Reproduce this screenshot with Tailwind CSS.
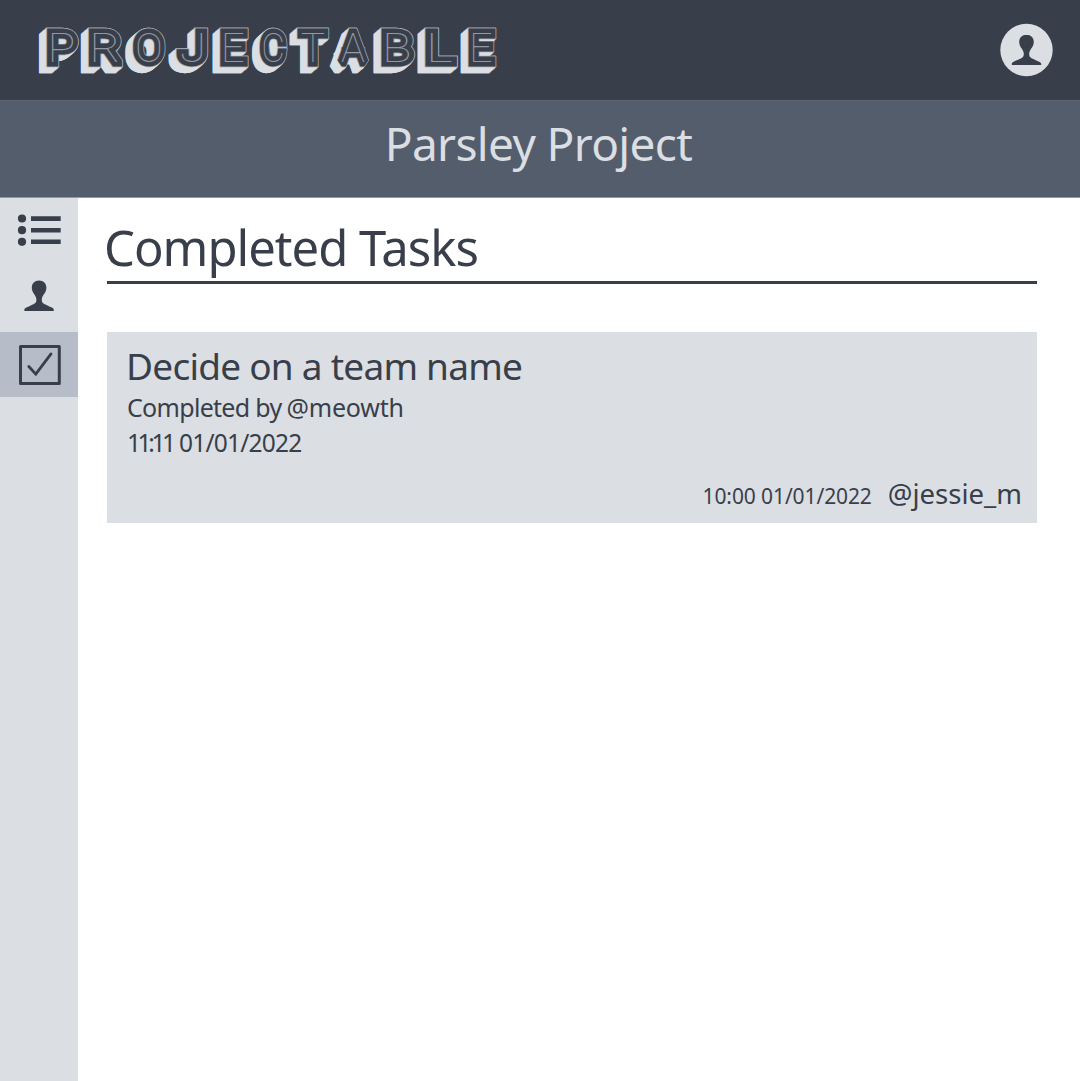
<!DOCTYPE html>
<html lang="en">
<head>
<meta charset="utf-8">
<title>Projectable</title>
<script src="https://cdn.jsdelivr.net/npm/@tailwindcss/browser@4"></script>
</head>
<body class="h-[1081px] w-[1080px] overflow-hidden bg-white text-[#393f4a] font-['Noto_Sans',sans-serif] flex flex-col">
<header class="h-[100px] shrink-0 bg-[#393f4a] flex items-center justify-between pl-[34px] pr-[27px]">
  <svg id="logo" class="w-[470px] h-[60px]" viewBox="34 20 470 60" aria-label="PROJECTABLE"></svg>
  <svg class="w-[53px] h-[54px]" viewBox="1000 23 53 54"><circle cx="1026.5" cy="50" r="26.2" fill="#dbdee3"/><path fill="#393f4a" d="M1026.500 34.700c-4.400 0-7.300 3-7.300 7.200 0 5.400 4.600 7.300 4.600 12 0 3.200-1.500 3.600-3.600 4.800-4.200 2.300-8.400 3.200-8.400 5.200v1.200h29.400v-1.200c0-2-4.200-2.900-8.400-5.200-2.100-1.200-3.600-1.600-3.600-4.800 0-4.700 4.600-6.600 4.600-12 0-4.200-2.900-7.200-7.300-7.200z"/></svg>
</header>
<div class="h-[98px] shrink-0 bg-[#545d6c] border-t border-b border-t-[#5c6574] border-b-[#9299a4] text-[#dbdee3] flex justify-center pt-[10px] pr-[3px]"><h1 class="text-[46px] leading-[64px] tracking-[-0.65px] whitespace-nowrap"><span>Parsley Project</span></h1></div>
<div class="flex grow">
  <aside class="w-[78px] bg-[#dbdee3] flex flex-col">
    <a class="h-[66px]"><svg class="w-[78px] h-[66px]" viewBox="0 198 78 66" fill="#393f4a"><circle cx="22" cy="218.500" r="4.100"/><circle cx="22" cy="230.200" r="4.100"/><circle cx="22" cy="241.800" r="4.100"/><path d="M31 216.200h29.700v4.700H31zM31 227.900h29.700v4.700H31zM31 239.400h29.700v4.700H31z"/></svg></a>
    <a class="h-[68px]"><svg class="w-[78px] h-[68px]" viewBox="0 264 78 68"><path fill="#393f4a" d="M39.100 280.500c-4.400 0-7.300 3-7.300 7.200 0 5.400 4.600 7.300 4.600 12 0 3.200-1.500 3.600-3.600 4.800-4.200 2.300-8.400 3.200-8.400 5.200v1.300h29.400v-1.300c0-2-4.200-2.900-8.400-5.200-2.100-1.200-3.600-1.600-3.600-4.800 0-4.700 4.600-6.600 4.600-12 0-4.200-2.900-7.200-7.300-7.200z"/></svg></a>
    <a class="h-[65px] bg-[#b6bdc8]"><svg class="w-[78px] h-[65px]" viewBox="0 332 78 65" fill="none" stroke="#393f4a"><rect x="20.500" y="346.400" width="38.800" height="37.200" stroke-width="3" stroke-linejoin="round"/><path d="M28.800 366.500l7 7.600 15.200-20.200" stroke-width="2.800" stroke-linecap="round"/></svg></a>
  </aside>
  <main class="grow pl-[29px] pr-[43px] pt-[19px]">
    <h2 class="h-[67px] border-b-3 border-[#393f4a] text-[49px] leading-[61px] tracking-[-1px] whitespace-nowrap"><span class="-ml-[3px]">Completed Tasks</span></h2>
    <section class="mt-12 h-[191px] bg-[#dbdee3] pl-5 pr-[15px] pt-[9px] flex flex-col whitespace-nowrap">
      <h3 class="-ml-px text-[37px] leading-[50px] tracking-[-0.75px]"><span>Decide on a team name</span></h3>
      <p class="h-[34px] text-[25px] leading-[32px] tracking-[-0.7px] flex gap-[5px]"><span>Completed by</span><span class="tracking-[-0.2px]">@meowth</span></p>
      <p class="text-[24.5px] leading-[36px] flex gap-[7px]"><span class="tracking-[-3.4px] w-[45px]">11:11</span><span class="tracking-[-0.8px]">01/01/2022</span></p>
      <div class="mt-3 flex items-baseline justify-end gap-4"><time class="text-[21px] tracking-[-0.1px]">10:00 01/01/2022</time><span class="text-[27.5px]">@jessie_m</span></div>
    </section>
  </main>
</div>
<script>
// Extruded wordmark: a hairline typeface is stroked to make the face, repeated to make the shadow.
const letters = [['P',46,78],['R',88,122.7],['O',132,166],['J',176,208],['E',219,249],['C',258,288],['T',296.7,329],['A',336,370],['B',380.7,414],['L',425,457],['E',467,496.7]];
const ctx = document.createElement('canvas').getContext('2d');
ctx.font = '100 40px Roboto';
const S = 10, top0 = 27, bottom = 67;
const word = letters.map(([c, a, b]) => {
  const m = ctx.measureText(c), w = m.actualBoundingBoxLeft + m.actualBoundingBoxRight;
  const h = m.actualBoundingBoxAscent + m.actualBoundingBoxDescent;
  const sx = (b - a - S) / w, sy = (bottom - top0 - S) / h;
  const x = a + S / 2 + m.actualBoundingBoxLeft * sx, y = bottom - S / 2 - m.actualBoundingBoxDescent * sy;
  return `<text transform="translate(${x} ${y}) scale(${sx} ${sy})">${c}</text>`;
}).join('');
const layer = (dx, dy, style) => `<use href="#word" x="${dx}" y="${dy}" ${style}/>`;
let out = `<defs><g id="word" font-family="Roboto" font-weight="100" font-size="40" stroke-linejoin="miter" stroke-miterlimit="1.6">${word}</g></defs>`;
for (let i = 16; i >= 1; i--) out += layer(-7.2 * i / 16, 6.2 * i / 16, 'fill="#dbdee3" stroke="#dbdee3" stroke-width="10"');
out += layer(0, 0, 'fill="#a3a8b1" stroke="#a3a8b1" stroke-width="10"');
out += layer(0, 0, 'fill="#393f4a" stroke="#393f4a" stroke-width="8.600"');
out += layer(0, 0, 'fill="#9398a2"');
document.getElementById('logo').innerHTML = out;
</script>
</body>
</html>
